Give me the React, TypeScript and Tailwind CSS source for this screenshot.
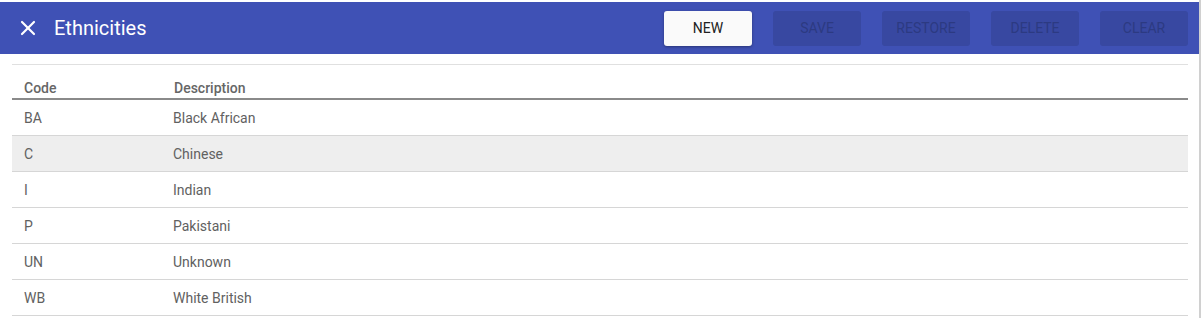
import { X } from "lucide-react";

const rows = [
  { code: "BA", description: "Black African" },
  { code: "C", description: "Chinese", selected: true },
  { code: "I", description: "Indian" },
  { code: "P", description: "Pakistani" },
  { code: "UN", description: "Unknown" },
  { code: "WB", description: "White British" },
];

const actions = ["SAVE", "RESTORE", "DELETE", "CLEAR"];

export default function App() {
  return (
    <div
      className="flex h-[318px] w-[1202px] bg-white"
      style={{ fontFamily: "Roboto, 'Liberation Sans', sans-serif" }}
    >
      <div className="flex w-[1199px] flex-col pt-[2px]">
        <header className="flex h-[52px] items-center bg-[#3f51b5] pl-[16px] pr-[11px]">
          <X className="h-[24px] w-[24px] text-white" strokeWidth={2.2} />
          <h1 className="ml-[14px] text-[20px] text-white">Ethnicities</h1>
          <div className="ml-auto flex gap-[21px]">
            <button className="h-[35px] w-[88px] rounded-[3px] bg-[#fafafa] text-[14px] text-[#212121] shadow-[0_1px_3px_rgba(0,0,0,0.35)]">
              NEW
            </button>
            {actions.map((a) => (
              <button
                key={a}
                className="h-[35px] w-[88px] rounded-[3px] bg-[#3848a1] text-[14px] text-[#2c3a82]"
              >
                {a}
              </button>
            ))}
          </div>
        </header>

        <div className="ml-[12px] mr-[11px] mt-[10px] border-t border-[#e0e0e0]">
          <div className="flex h-[35px] items-end border-b-2 border-[#8a8a8a] text-[14px] font-medium leading-[20px] text-[#666666]">
            <div className="w-[150px] pl-[12px]">Code</div>
            <div className="pl-[12px]">Description</div>
          </div>
          {rows.map((r) => (
            <div
              key={r.code}
              className={`flex h-[36px] items-center border-b border-[#d6d6d6] pt-[2px] text-[14px] text-[#616161] ${
                r.selected ? "bg-[#eeeeee]" : ""
              }`}
            >
              <div className="w-[150px] pl-[12px]">{r.code}</div>
              <div className="pl-[11px]">{r.description}</div>
            </div>
          ))}
        </div>
      </div>
      <div className="w-[2px] bg-[#d0d0d0]" />
    </div>
  );
}
